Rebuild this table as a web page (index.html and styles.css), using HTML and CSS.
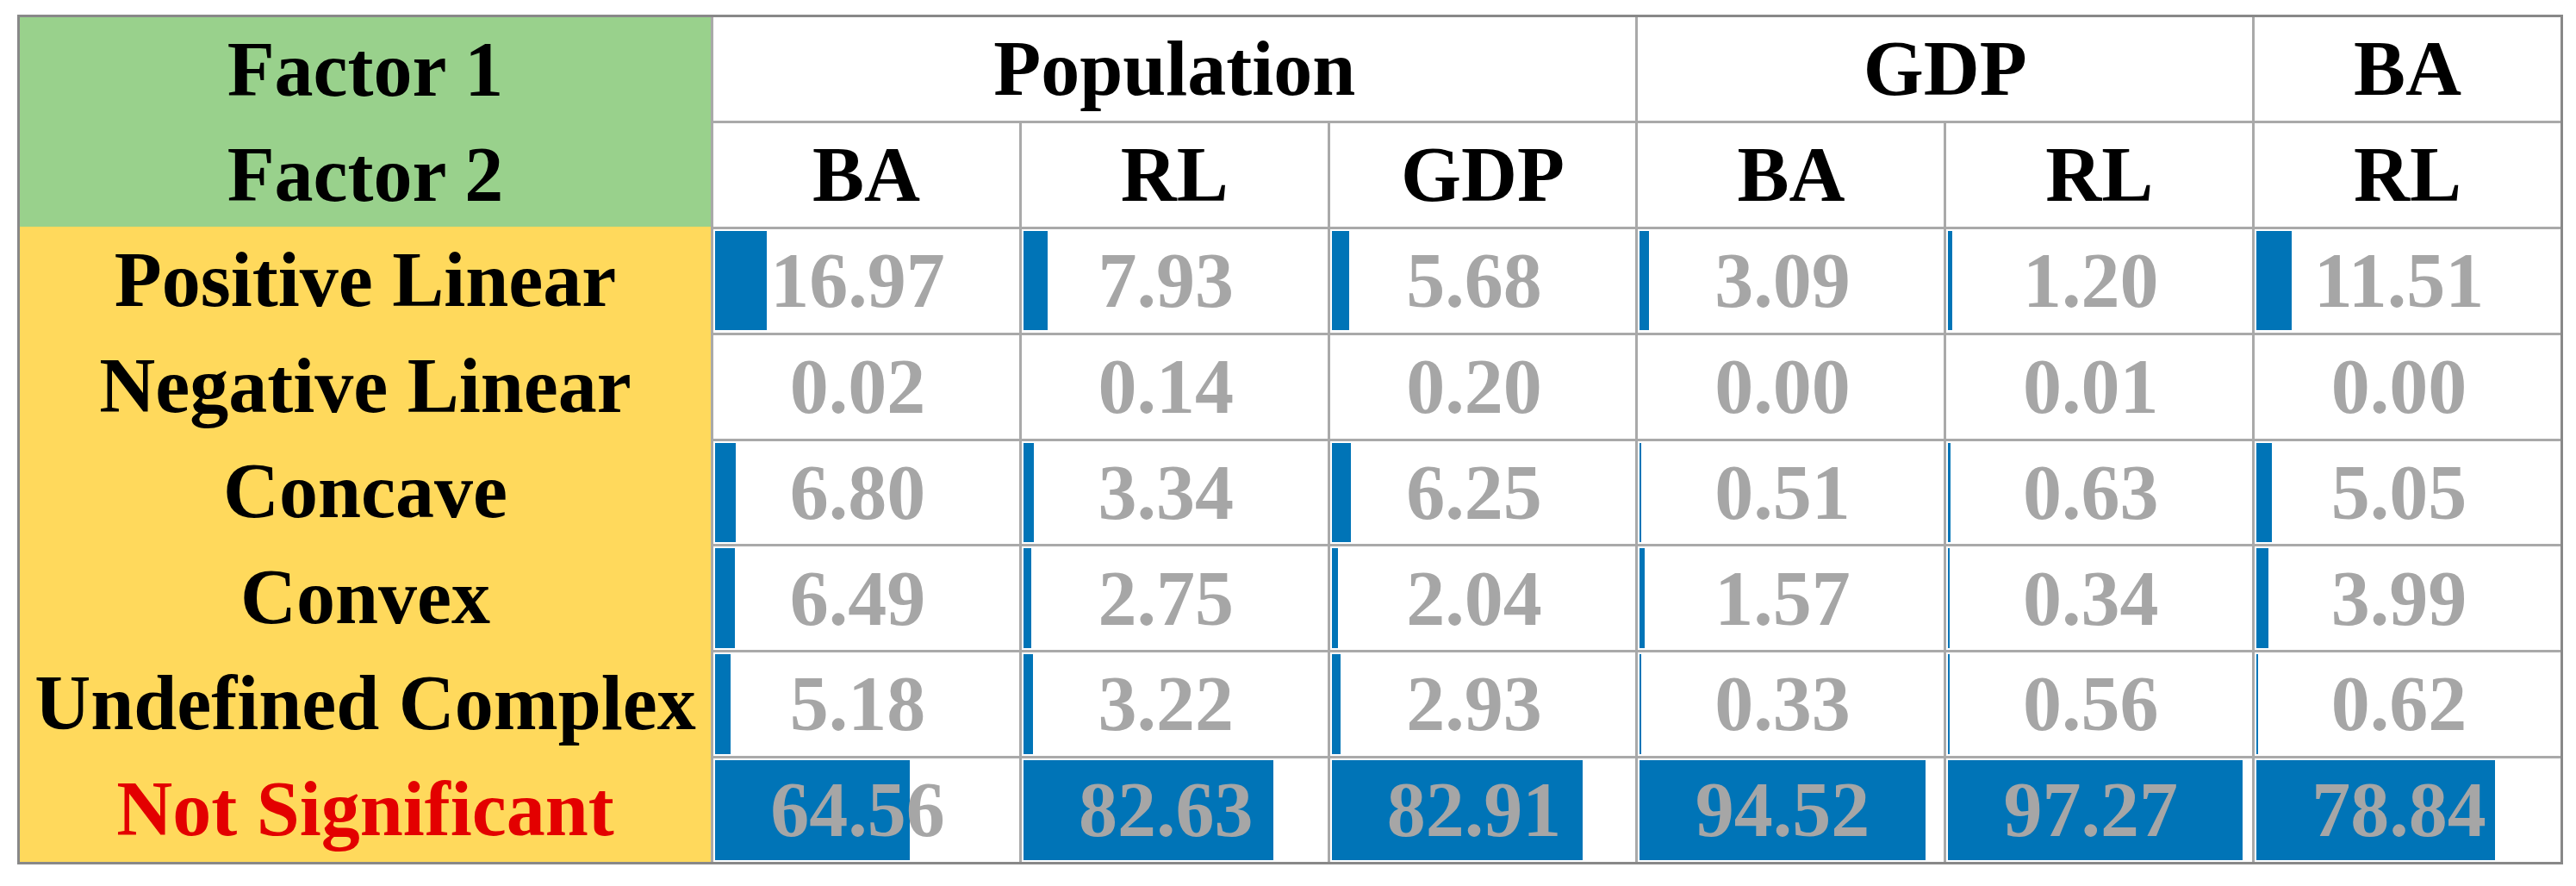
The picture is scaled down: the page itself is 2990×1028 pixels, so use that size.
FILE: index.html
```html
<!DOCTYPE html>
<html lang="en">
<head>
<meta charset="utf-8">
<title>Factor relationship table</title>
<link rel="stylesheet" href="styles.css">
</head>
<body>
<div class="table">
  <div class="labels">
    <div class="labels-head">
      <div class="label">Factor 1</div>
      <div class="label">Factor 2</div>
    </div>
    <div class="labels-body">
      <div class="label">Positive Linear</div>
      <div class="label">Negative Linear</div>
      <div class="label">Concave</div>
      <div class="label">Convex</div>
      <div class="label">Undefined Complex</div>
      <div class="label label-red">Not Significant</div>
    </div>
  </div>

  <div class="head span3">Population</div>
  <div class="head span2">GDP</div>
  <div class="head">BA</div>

  <div class="head">BA</div>
  <div class="head">RL</div>
  <div class="head">GDP</div>
  <div class="head">BA</div>
  <div class="head">RL</div>
  <div class="head">RL</div>

  <div class="cell"><div class="bar" style="width:16.97%"></div><div class="val">16.97</div></div>
  <div class="cell"><div class="bar" style="width:7.93%"></div><div class="val">7.93</div></div>
  <div class="cell"><div class="bar" style="width:5.68%"></div><div class="val">5.68</div></div>
  <div class="cell"><div class="bar" style="width:3.09%"></div><div class="val">3.09</div></div>
  <div class="cell"><div class="bar" style="width:1.20%"></div><div class="val">1.20</div></div>
  <div class="cell"><div class="bar" style="width:11.51%"></div><div class="val">11.51</div></div>

  <div class="cell"><div class="bar" style="width:0%"></div><div class="val">0.02</div></div>
  <div class="cell"><div class="bar" style="width:0%"></div><div class="val">0.14</div></div>
  <div class="cell"><div class="bar" style="width:0%"></div><div class="val">0.20</div></div>
  <div class="cell"><div class="bar" style="width:0%"></div><div class="val">0.00</div></div>
  <div class="cell"><div class="bar" style="width:0%"></div><div class="val">0.01</div></div>
  <div class="cell"><div class="bar" style="width:0%"></div><div class="val">0.00</div></div>

  <div class="cell"><div class="bar" style="width:6.80%"></div><div class="val">6.80</div></div>
  <div class="cell"><div class="bar" style="width:3.34%"></div><div class="val">3.34</div></div>
  <div class="cell"><div class="bar" style="width:6.25%"></div><div class="val">6.25</div></div>
  <div class="cell"><div class="bar" style="width:0.51%"></div><div class="val">0.51</div></div>
  <div class="cell"><div class="bar" style="width:0.63%"></div><div class="val">0.63</div></div>
  <div class="cell"><div class="bar" style="width:5.05%"></div><div class="val">5.05</div></div>

  <div class="cell"><div class="bar" style="width:6.49%"></div><div class="val">6.49</div></div>
  <div class="cell"><div class="bar" style="width:2.75%"></div><div class="val">2.75</div></div>
  <div class="cell"><div class="bar" style="width:2.04%"></div><div class="val">2.04</div></div>
  <div class="cell"><div class="bar" style="width:1.57%"></div><div class="val">1.57</div></div>
  <div class="cell"><div class="bar" style="width:0.34%"></div><div class="val">0.34</div></div>
  <div class="cell"><div class="bar" style="width:3.99%"></div><div class="val">3.99</div></div>

  <div class="cell"><div class="bar" style="width:5.18%"></div><div class="val">5.18</div></div>
  <div class="cell"><div class="bar" style="width:3.22%"></div><div class="val">3.22</div></div>
  <div class="cell"><div class="bar" style="width:2.93%"></div><div class="val">2.93</div></div>
  <div class="cell"><div class="bar" style="width:0.33%"></div><div class="val">0.33</div></div>
  <div class="cell"><div class="bar" style="width:0.56%"></div><div class="val">0.56</div></div>
  <div class="cell"><div class="bar" style="width:0.62%"></div><div class="val">0.62</div></div>

  <div class="cell"><div class="bar" style="width:64.56%"></div><div class="val">64.56</div></div>
  <div class="cell"><div class="bar" style="width:82.63%"></div><div class="val">82.63</div></div>
  <div class="cell"><div class="bar" style="width:82.91%"></div><div class="val">82.91</div></div>
  <div class="cell"><div class="bar" style="width:94.52%"></div><div class="val">94.52</div></div>
  <div class="cell"><div class="bar" style="width:97.27%"></div><div class="val">97.27</div></div>
  <div class="cell"><div class="bar" style="width:78.84%"></div><div class="val">78.84</div></div>
</div>
</body>
</html>
```

FILE: styles.css
```css
html, body {
  margin: 0;
  padding: 0;
  background: #ffffff;
}

body {
  padding: 17px 0 0 20px;
  font-family: "Liberation Serif", "Times New Roman", serif;
  font-weight: bold;
  font-size: 90px;
  line-height: normal;
}

.table {
  display: grid;
  width: fit-content;
  grid-template-columns: 802px repeat(6, 354.83px);
  grid-template-rows: repeat(8, 119.875px);
  gap: 3px;
  background: #a9a9a9;
  border: 3px solid #888888;
}

.labels {
  grid-column: 1;
  grid-row: 1 / -1;
  display: flex;
  flex-direction: column;
}

.labels-head {
  flex: 0 0 242.75px;
  background: #99d18c;
  display: flex;
  flex-direction: column;
}

.labels-body {
  flex: 1 1 auto;
  background: #ffd95c;
  display: flex;
  flex-direction: column;
}

.label {
  flex: 1 1 0;
  display: flex;
  align-items: center;
  justify-content: center;
  color: #000000;
  white-space: nowrap;
}

.label-red {
  color: #e30000;
}

.head {
  background: #ffffff;
  display: flex;
  align-items: center;
  justify-content: center;
  color: #000000;
}

.span3 {
  grid-column: span 3;
}

.span2 {
  grid-column: span 2;
}

.cell {
  background: #ffffff;
  padding: 2px 2px 2.5px 2px;
  display: grid;
  grid-template-columns: 100%;
  grid-template-rows: 100%;
}

.bar {
  grid-area: 1 / 1;
  background: #0074b7;
  height: 100%;
  justify-self: start;
}

.val {
  grid-area: 1 / 1;
  display: flex;
  align-items: center;
  justify-content: center;
  padding-right: 20px;
  color: #a6a6a6;
}
```
